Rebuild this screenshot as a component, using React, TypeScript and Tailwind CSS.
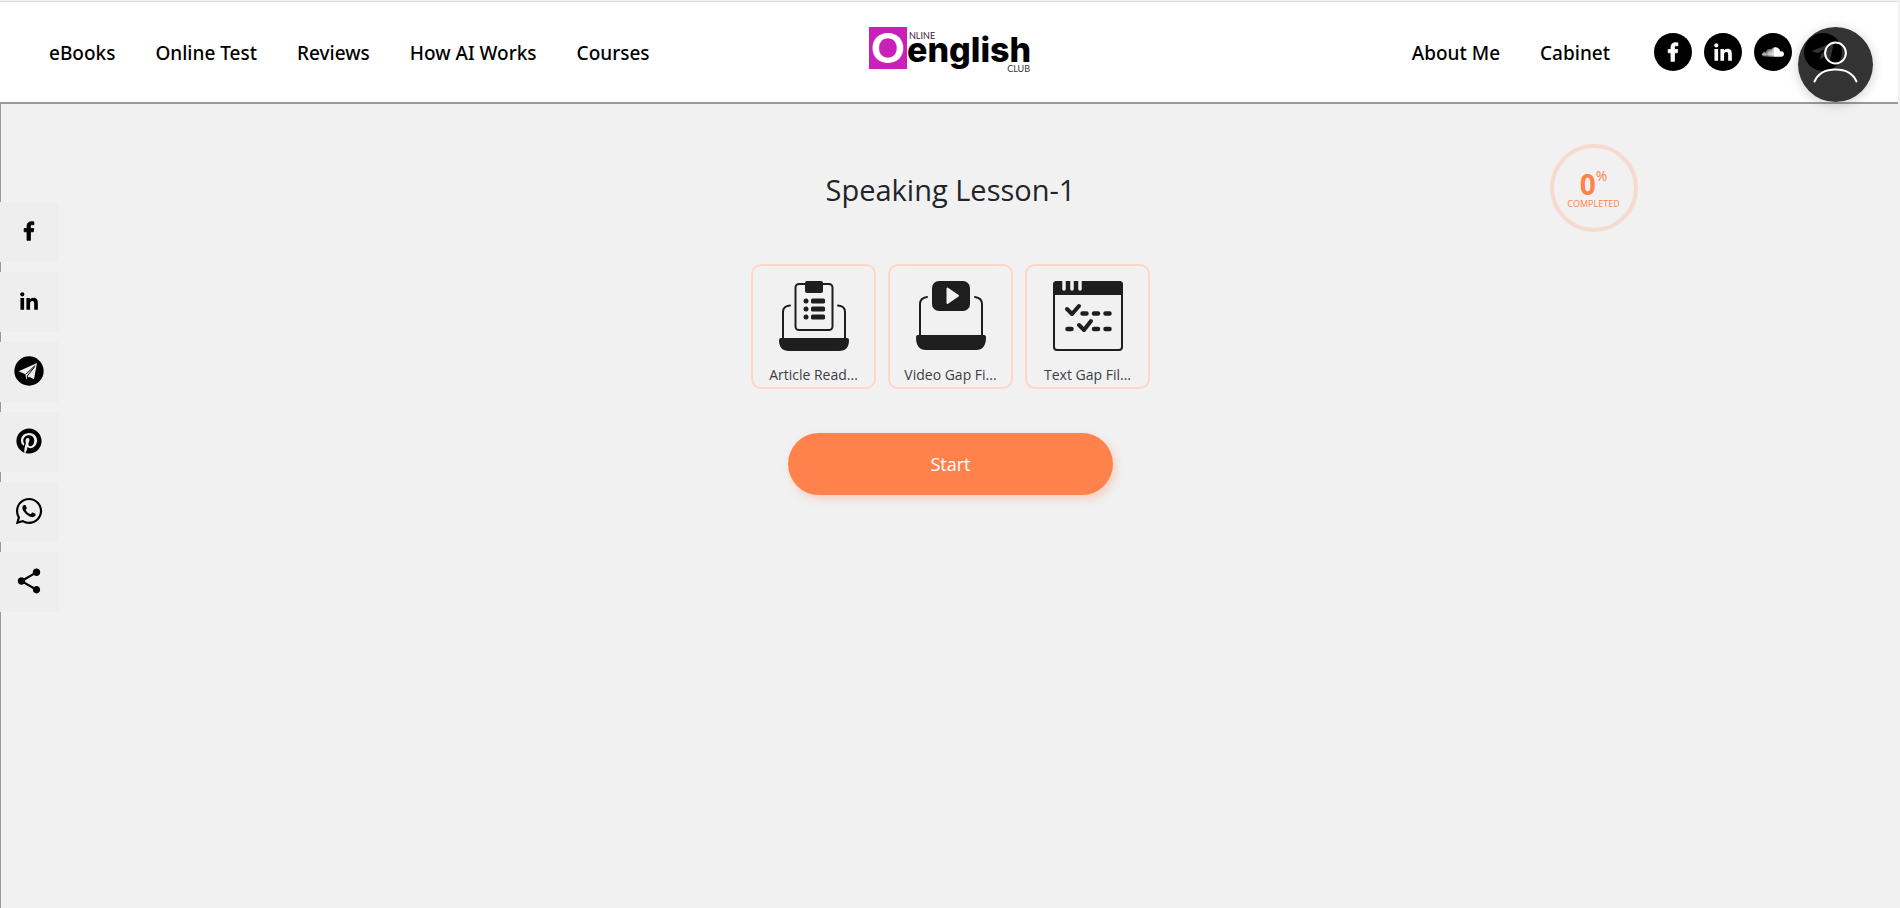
import React from 'react';
import { FaSoundcloud, FaTelegramPlane, FaPinterest, FaWhatsapp } from 'react-icons/fa';
import { MdShare } from 'react-icons/md';

interface NavItem {
    label: string;
    href: string;
}

const leftNav: NavItem[] = [
    { label: 'eBooks', href: '#ebooks' },
    { label: 'Online Test', href: '#test' },
    { label: 'Reviews', href: '#reviews' },
    { label: 'How AI Works', href: '#ai' },
    { label: 'Courses', href: '#courses' },
];

const rightNav: NavItem[] = [
    { label: 'About Me', href: '#about' },
    { label: 'Cabinet', href: '#cabinet' },
];

const FacebookIcon = () => (
    <svg viewBox="0 0 32 32" className="w-[26px] h-[26px]" fill="currentColor" stroke="currentColor" strokeWidth="1">
        <path d="M17.78 27.5V17.008h3.522l.527-4.09h-4.05v-2.61c0-1.182.33-1.99 2.023-1.99h2.166V4.66c-.375-.05-1.66-.16-3.155-.16-3.123 0-5.26 1.905-5.26 5.405v3.016h-3.53v4.09h3.53V27.5h4.223z" />
    </svg>
);

const LinkedInIcon = () => (
    <svg viewBox="0 0 32 32" className="w-7 h-7" fill="currentColor">
        <path d="M6.227 12.61h4.19v13.48h-4.19V12.61zm2.095-6.7a2.43 2.43 0 0 1 0 4.86c-1.344 0-2.428-1.09-2.428-2.43s1.084-2.43 2.428-2.43m4.72 6.7h4.02v1.84h.058c.56-1.058 1.927-2.176 3.965-2.176 4.238 0 5.02 2.792 5.02 6.42v7.395h-4.183v-6.56c0-1.564-.03-3.574-2.178-3.574-2.18 0-2.514 1.7-2.514 3.46v6.668h-4.187V12.61z" />
    </svg>
);

const TelegramIcon = () => (
    <svg viewBox="0 0 90 90" className="w-[30px] h-[30px]">
        <circle cx="45" cy="45" r="44" fill="currentColor" />
        <path d="M14 46L69 21 60 70 45 62 37 70 34 55z" fill="#eee" />
        <path d="M64 28L35 55M62 32L40 60v8" stroke="currentColor" strokeWidth="3" fill="none" />
    </svg>
);

const socials = [
    { name: 'Facebook', icon: <FacebookIcon /> },
    { name: 'LinkedIn', icon: <LinkedInIcon /> },
    { name: 'SoundCloud', icon: <FaSoundcloud className="w-[22px] h-[22px]" /> },
    { name: 'Telegram', icon: <FaTelegramPlane className="w-6 h-6" /> },
];

const shareLinks = [
    { name: 'Share on Facebook', icon: <FacebookIcon /> },
    { name: 'Share on LinkedIn', icon: <LinkedInIcon /> },
    { name: 'Share on Telegram', icon: <TelegramIcon /> },
    { name: 'Share on Pinterest', icon: <FaPinterest className="w-[26px] h-[26px]" /> },
    { name: 'Share on WhatsApp', icon: <FaWhatsapp className="w-[30px] h-[30px]" /> },
    { name: 'Share', icon: <MdShare className="w-[30px] h-[30px]" /> },
];

const Logo = () => (
    <svg viewBox="0 0 164 50" className="w-[164px] h-[50px] overflow-visible" role="img" aria-label="Online English Club">
        <rect x="1" y="2" width="38" height="42" fill="#cb1fb9" />
        <text x="20" y="38" textAnchor="middle" fontFamily="Lato, sans-serif" fontWeight="900" fontSize="41" fill="#fff">O</text>
        <text x="41" y="14" fontFamily="Lato, sans-serif" fontSize="9" fill="#3b2338">NLINE</text>
        <text x="39" y="37" fontFamily="Inter, sans-serif" fontWeight="800" fontSize="34" fill="#000">english</text>
        <text x="162" y="47" textAnchor="end" fontFamily="Lato, sans-serif" fontSize="9" fill="#333">CLUB</text>
    </svg>
);

const ArticleIcon = () => (
    <svg viewBox="0 0 70 70" className="w-[70px] h-[70px]" fill="none" stroke="#1e1e1e" strokeWidth="2" strokeLinecap="round">
        <path d="M4 57V31q0-6 7-6.500M66 57V31q0-6-7-6.500" />
        <rect x="16.500" y="3" width="37" height="46" rx="3.500" />
        <path d="M28 0h14q2 0 2 2v8q0 2-2 2H28q-2 0-2-2V2q0-2 2-2z" fill="#1e1e1e" stroke="none" />
        <path d="M0 59q0-2 2-2h66q2 0 2 2 0 11-10 11H10Q0 70 0 59z" fill="#1e1e1e" stroke="none" />
        <g fill="#1e1e1e" stroke="none">
            <circle cx="27" cy="20" r="2.500" />
            <circle cx="27" cy="28" r="2.500" />
            <circle cx="27" cy="36" r="2.500" />
            <rect x="32" y="17.500" width="14" height="5" rx="1.500" />
            <rect x="32" y="25.500" width="14" height="5" rx="1.500" />
            <rect x="32" y="33.500" width="14" height="5" rx="1.500" />
        </g>
    </svg>
);

const VideoIcon = () => (
    <svg viewBox="0 0 70 70" className="w-[70px] h-[70px]" fill="none" stroke="#1e1e1e" strokeWidth="2" strokeLinecap="round">
        <path d="M4 55V23q0-6 7-7M66 55V23q0-6-7-7" />
        <rect x="16" y="0" width="38" height="30" rx="7" fill="#1e1e1e" stroke="none" />
        <path d="M31.500 7.500v14.500L42 14.750z" fill="#f1f1f1" stroke="#f1f1f1" strokeLinejoin="round" />
        <path d="M0 56q0-2 2-2h66q2 0 2 2 0 13-10 13H10Q0 69 0 56z" fill="#1e1e1e" stroke="none" />
    </svg>
);

const TextIcon = () => (
    <svg viewBox="0 0 70 70" className="w-[70px] h-[70px]" fill="none" stroke="#1e1e1e" strokeLinecap="round" strokeLinejoin="round">
        <rect x="1" y="1" width="68" height="68" rx="3" strokeWidth="2" />
        <path d="M4 0h62q4 0 4 4v10H0V4q0-4 4-4z" fill="#1e1e1e" stroke="none" />
        <path d="M11 0v8M19 0v8M27 0v8" stroke="#f1f1f1" strokeWidth="3.500" />
        <path d="M14 28l5 5 7-8M26 44l5 5 7-9" strokeWidth="4" />
        <path d="M29.500 32.500h4M41 32.500h4M52.500 32.500h4M14.500 48h4M41 48h4M52.500 48h4" strokeWidth="4.500" />
    </svg>
);

const tasks = [
    { title: 'Article Read...', icon: <ArticleIcon /> },
    { title: 'Video Gap Fi...', icon: <VideoIcon /> },
    { title: 'Text Gap Fil...', icon: <TextIcon /> },
];

const NavLinks: React.FC<{ items: NavItem[] }> = ({ items }) => (
    <nav className="flex items-center gap-10 pt-0.5 text-[19px] font-medium text-black whitespace-nowrap">
        {items.map((item) => (
            <a key={item.label} href={item.href}>{item.label}</a>
        ))}
    </nav>
);

const Header = () => (
    <header className="mr-0.5 mt-px h-[103px] bg-white border-t border-t-[#dcdcdc] border-b-2 border-b-[#999] grid grid-cols-[1fr_auto_1fr] items-center pl-[49px] pr-14 font-['Noto_Sans',sans-serif]">
        <NavLinks items={leftNav} />
        <a href="#home" className="pl-2 pb-1"><Logo /></a>
        <div className="flex items-center justify-end gap-11">
            <NavLinks items={rightNav} />
            <div className="flex gap-3">
                {socials.map((s) => (
                    <a key={s.name} href="#social" aria-label={s.name} className="w-[38px] h-[38px] rounded-full bg-black text-white flex items-center justify-center">
                        {s.icon}
                    </a>
                ))}
            </div>
        </div>
    </header>
);

const Progress: React.FC<{ value: number }> = ({ value }) => (
    <div className="w-[88px] h-[88px] rounded-full border-4 border-[#f6dace] text-[#ff824c] flex flex-col items-center justify-center pt-1">
        <div className="flex items-start">
            <span className="text-[28px] leading-7 font-bold">{value}</span>
            <span className="text-sm leading-3">%</span>
        </div>
        <span className="text-[9px] leading-3">COMPLETED</span>
    </div>
);

export default function App() {
    return (
        <div className="min-h-screen flex flex-col bg-[#f1f1f1] font-['Open_Sans','Noto_Sans',sans-serif]">
            <Header />

            <button aria-label="Account" className="absolute right-[27px] top-[27px] w-[75px] h-[75px] rounded-full bg-black/80 shadow-[0_2px_12px_rgba(0,0,0,0.2)]">
                <svg viewBox="0 0 75 75" className="w-full h-full" fill="none" stroke="#fff" strokeWidth="2" strokeLinecap="round">
                    <circle cx="37.500" cy="26" r="10.400" />
                    <path d="M16.500 54.500C20 46.500 27 42.500 37.500 42.500S55 46.500 58.500 54.500" />
                </svg>
            </button>

            <aside className="absolute left-0 top-[202px] flex flex-col gap-2.5">
                {shareLinks.map((s) => (
                    <a key={s.name} href="#share" aria-label={s.name} className="w-[59px] h-[60px] pr-0.5 pb-0.5 bg-[#eee] text-black flex items-center justify-center first:rounded-tr last:rounded-br">
                        {s.icon}
                    </a>
                ))}
            </aside>

            <main className="grow border-l border-[#999] flex flex-col items-center pt-10">
                <div className="w-full max-w-[1374px] grid grid-cols-[1fr_auto_1fr] items-center">
                    <h1 className="col-start-2 pt-1 text-[29px] leading-10 text-[#212529]">Speaking Lesson-1</h1>
                    <div className="justify-self-end">
                        <Progress value={0} />
                    </div>
                </div>

                <div className="mt-8 flex gap-3">
                    {tasks.map((task) => (
                        <a key={task.title} href="#task" className="w-[125px] h-[125px] rounded-[10px] border-2 border-[#ffd5c5] pt-[15px] flex flex-col items-center gap-3.5 text-[#3c4043]">
                            {task.icon}
                            <span className="text-sm leading-5">{task.title}</span>
                        </a>
                    ))}
                </div>

                <button className="mt-11 w-[325px] h-[62px] rounded-full bg-[#ff824c] text-white text-lg shadow-[3px_4px_8px_rgba(255,130,76,0.3)]">
                    Start
                </button>
            </main>
        </div>
    );
}
